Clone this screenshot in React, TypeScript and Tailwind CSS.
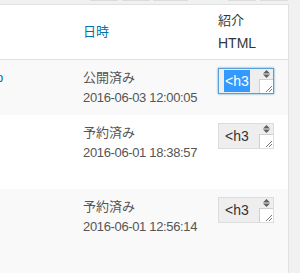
import React from "react";

const SANS = "font-['Liberation_Sans','Noto_Sans_CJK_JP',sans-serif]";
const NARROW = "font-['Liberation_Sans_Narrow','Liberation_Sans','Noto_Sans_CJK_JP',sans-serif]";

function HtmlBox({ focused }: { focused?: boolean }) {
  return (
    <div
      className={`flex w-[56px] h-[26px] border bg-[#eeeeee] ${
        focused
          ? "border-[#5b9dd9] shadow-[0_0_2px_rgba(30,140,190,0.8)]"
          : "border-[#dddddd]"
      }`}
    >
      <div className={`flex-1 pl-[5px] pt-[1px] ${SANS} text-[14px] leading-[22px]`}>
        {focused ? (
          <span className="inline-block bg-[#3399ff] text-white px-[1px]">&lt;h3</span>
        ) : (
          <span className="inline-block text-[#333333] px-[1px]">&lt;h3</span>
        )}
      </div>
      <div className="w-[14px] flex flex-col">
        <div className="h-[10px] flex items-center justify-center">
          <svg width="7" height="8" viewBox="0 0 7 8">
            <polygon points="3.5,0 7,3.5 0,3.5" fill="#606060" />
            <polygon points="0,4.5 7,4.5 3.5,8" fill="#606060" />
          </svg>
        </div>
        <div className="flex-1 bg-white border-l border-t border-[#cfcfcf] flex items-end justify-end">
          <svg width="9" height="9" viewBox="0 0 9 9">
            <line x1="2" y1="8" x2="8" y2="2" stroke="#777" strokeWidth="1" />
            <line x1="5" y1="8" x2="8" y2="5" stroke="#777" strokeWidth="1" />
          </svg>
        </div>
      </div>
    </div>
  );
}

function Row({
  bg,
  height,
  status,
  date,
  focused,
  link,
}: {
  bg: string;
  height: string;
  status: string;
  date: string;
  focused?: boolean;
  link?: boolean;
}) {
  return (
    <div className={`flex ${bg} ${height} pt-[8px]`}>
      <div className={`w-[73px] overflow-hidden ${SANS} text-[13px] leading-[20px]`}>
        {link ? <span className="ml-[-4px] text-[#0073aa]">o</span> : null}
      </div>
      <div className={`w-[135px] pl-[10px] text-[#555555] text-[13px] leading-[20px]`}>
        <div className={SANS}>{status}</div>
        <div className={`${NARROW} tracking-[-0.35px]`}>{date}</div>
      </div>
      <div className="w-[80px] pl-[10px]">
        <HtmlBox focused={focused} />
      </div>
    </div>
  );
}

export default function App() {
  return (
    <div className="w-[300px] h-[273px] bg-[#f1f1f1] overflow-hidden flex flex-col">
      <div className="h-[4px] flex shrink-0">
        <div className="ml-[90px] w-[28px] h-[1px] bg-[#dcdcdc]" />
        <div className="ml-[4px] w-[28px] h-[1px] bg-[#dcdcdc]" />
        <div className="ml-[3px] w-[35px] h-[1px] bg-[#dcdcdc]" />
        <div className="ml-[40px] w-[28px] h-[1px] bg-[#dcdcdc]" />
        <div className="ml-[4px] w-[28px] h-[1px] bg-[#dcdcdc]" />
      </div>
      <div className="flex flex-1 min-h-0">
        <div className="w-[289px] border-t border-r border-[#e1e1e1] bg-white flex flex-col">
          <div className="flex h-[55px] border-b border-[#e1e1e1] items-center shrink-0">
            <div className="w-[73px]" />
            <div className={`w-[135px] pl-[10px] ${SANS} text-[13px] text-[#0073aa]`}>日時</div>
            <div className={`w-[80px] pl-[10px] ${SANS} text-[14px] leading-[22px] text-[#32373c]`}>
              <div className="text-[13px]">紹介</div>
              <div>HTML</div>
            </div>
          </div>
          <Row
            bg="bg-[#f9f9f9]"
            height="h-[58px]"
            status="公開済み"
            date="2016-06-03 12:00:05"
            focused
            link
          />
          <Row
            bg="bg-white"
            height="h-[79px]"
            status="予約済み"
            date="2016-06-01 18:38:57"
          />
          <Row
            bg="bg-[#f9f9f9]"
            height="h-[90px]"
            status="予約済み"
            date="2016-06-01 12:56:14"
          />
        </div>
      </div>
    </div>
  );
}
